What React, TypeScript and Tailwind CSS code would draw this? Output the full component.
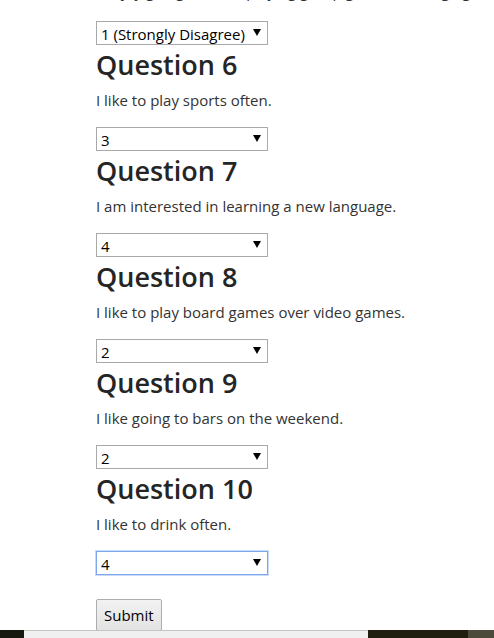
import { useState } from "react";

const questions = [
  { n: 6, text: "I like to play sports often.", value: "3" },
  { n: 7, text: "I am interested in learning a new language.", value: "4" },
  { n: 8, text: "I like to play board games over video games.", value: "2" },
  { n: 9, text: "I like going to bars on the weekend.", value: "2" },
  { n: 10, text: "I like to drink often.", value: "4" },
];

const options = ["1 (Strongly Disagree)", "2", "3", "4", "5 (Strongly Agree)"];

const Select = ({ value, focused }: { value: string; focused?: boolean }) => {
  const [val, setVal] = useState(value)
  return (
    <div className={`relative w-[172px] h-[24px] bg-white border ${focused ? "border-[#7ea6ec] shadow-[0_0_0_1px_#c8dafa]" : "border-[#a9a9a9]"}`}>
      <select
        value={val}
        onChange={(e) => setVal(e.target.value)}
        className="appearance-none w-full h-full bg-transparent pl-[4px] pr-5 text-[15px] leading-[22px] text-black outline-none"
      >
        {options.map((o) => (
          <option key={o} value={o}>{o}</option>
        ))}
      </select>
      <span className="pointer-events-none absolute right-[6px] top-[7px] w-0 h-0 border-l-[4px] border-r-[4px] border-t-[7px] border-l-transparent border-r-transparent border-t-black" />
    </div>
  )
}

const Question = ({ n, text }: { n: number; text: string }) => {
  return (
    <>
      <h2 className="mt-[2px] h-[36px] leading-[36px] text-[27px] font-semibold text-[#252525]">Question {n}</h2>
      <p className="mt-[6px] h-[22px] leading-[22px] text-[15px] text-[#333]">{text}</p>
    </>
  )
}

export default function App() {
  return (
    <div className="relative h-[638px] overflow-hidden bg-white font-['Open_Sans','Noto_Sans',sans-serif]">
      <div className="pl-[96px]">
        <p className="-mt-[20px] h-[22px] leading-[22px] text-[15px] text-[#333] whitespace-nowrap">
          I enjoy going out and playing group games or hanging out all night long
        </p>
        <div className="mt-[19px]">
          <Select value="1 (Strongly Disagree)" />
        </div>
        {questions.map((q, i) => (
          <div key={q.n}>
            <Question n={q.n} text={q.text} />
            <div className="mt-[16px]">
              <Select value={q.value} focused={i === questions.length - 1} />
            </div>
          </div>
        ))}
        <button className="mt-[24px] h-[32px] px-[7px] text-[15px] text-black border border-[#adadad] rounded-[2px] bg-gradient-to-b from-[#f2f2f2] to-[#e3e3e3]">
          Submit
        </button>
      </div>
      <div className="absolute bottom-0 left-0 right-0 h-[8px] flex">
        <div className="w-[24px] bg-[#17170f]" />
        <div className="w-[344px] bg-[#f0f0f0] border-t border-[#c4c4c4]" />
        <div className="w-[100px] bg-[#1f1d0e]" />
        <div className="flex-1 bg-[#4b4a3b]" />
      </div>
    </div>
  )
}
